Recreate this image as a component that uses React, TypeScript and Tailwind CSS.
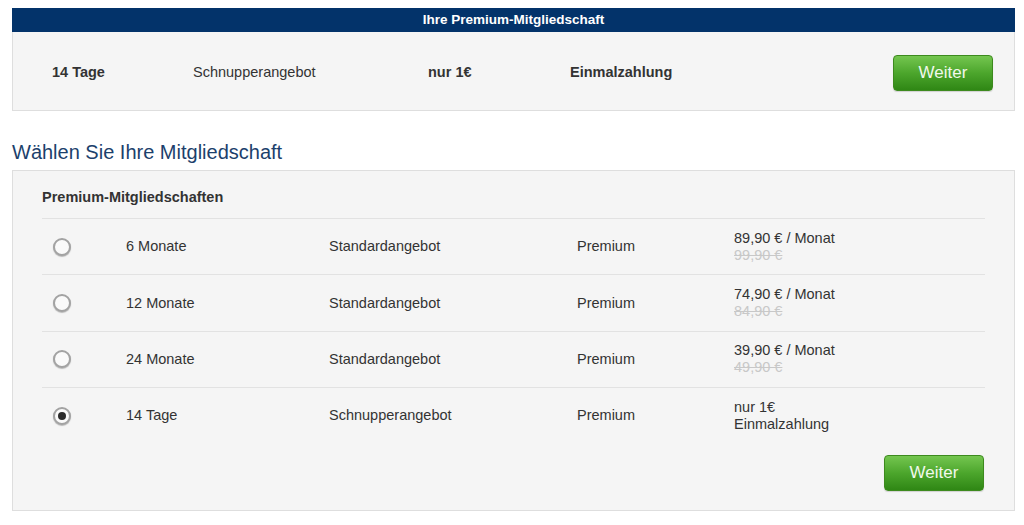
import React, { useState } from 'react';

type Plan = {
  id: string;
  duration: string;
  offer: string;
  level: string;
  price: string;
  sub: string;
  strike: boolean;
};

const PLANS: Plan[] = [
  { id: '6m', duration: '6 Monate', offer: 'Standardangebot', level: 'Premium', price: '89,90 € / Monat', sub: '99,90 €', strike: true },
  { id: '12m', duration: '12 Monate', offer: 'Standardangebot', level: 'Premium', price: '74,90 € / Monat', sub: '84,90 €', strike: true },
  { id: '24m', duration: '24 Monate', offer: 'Standardangebot', level: 'Premium', price: '39,90 € / Monat', sub: '49,90 €', strike: true },
  { id: '14d', duration: '14 Tage', offer: 'Schnupperangebot', level: 'Premium', price: 'nur 1€', sub: 'Einmalzahlung', strike: false },
];

function WeiterButton() {
  return (
    <button className="w-[100px] h-[36px] rounded-[4px] border border-[#3d8a1e] bg-gradient-to-b from-[#74c64f] via-[#4ca62c] to-[#2f8714] text-[17px] text-[#f1f8ec] shadow-[0_1px_1px_rgba(0,0,0,0.15)]">
      Weiter
    </button>
  );
}

function Radio({ checked }: { checked: boolean }) {
  return (
    <span className="flex items-center justify-center w-[18px] h-[18px] rounded-full border-2 border-[#a3a3a3] bg-[#fafafa] shadow-[0_1px_1px_rgba(0,0,0,0.25)]">
      {checked && <span className="w-[8px] h-[8px] rounded-full bg-[#2b2b2b]" />}
    </span>
  );
}

export default function App() {
  const [selected, setSelected] = useState('14d');

  return (
    <div className="w-[1024px] h-[525px] bg-white pt-[8px] px-[12px] text-[#333] font-['Liberation_Sans',Arial,sans-serif] overflow-hidden">
      {/* Current membership */}
      <div className="w-[1003px]">
        <div className="h-[24px] bg-[#03336a] flex items-center justify-center text-white font-bold text-[13.5px]">
          Ihre Premium-Mitgliedschaft
        </div>
        <div className="h-[79px] bg-[#f5f5f5] border border-t-0 border-[#dedede] flex items-center pt-[3px] pl-[39px] pr-[21px] text-[14.5px]">
          <span className="w-[141px] font-bold">14 Tage</span>
          <span className="w-[235px]">Schnupperangebot</span>
          <span className="w-[142px] font-bold">nur 1€</span>
          <span className="flex-1 font-bold">Einmalzahlung</span>
          <WeiterButton />
        </div>
      </div>

      <h2 className="mt-[29px] mb-[6px] text-[20px] leading-[24px] text-[#1c3f6c]">Wählen Sie Ihre Mitgliedschaft</h2>

      {/* Plan choice */}
      <div className="w-[1003px] bg-[#f5f5f5] border border-[#dedede] pt-[18px] pb-[19px] px-[29px] text-[14.5px] leading-[17px]">
        <h3 className="font-bold pb-[12px]">Premium-Mitgliedschaften</h3>
        {PLANS.map((p) => (
          <div
            key={p.id}
            onClick={() => setSelected(p.id)}
            className="grid grid-cols-[84px_203px_248px_157px_1fr] items-center border-t border-[#e2e2e2] py-[10.7px] cursor-pointer"
          >
            <div className="pl-[11px]">
              <Radio checked={selected === p.id} />
            </div>
            <div>{p.duration}</div>
            <div>{p.offer}</div>
            <div>{p.level}</div>
            <div>
              <div>{p.price}</div>
              <div className={p.strike ? 'text-[#c8c8c8] line-through' : ''}>{p.sub}</div>
            </div>
          </div>
        ))}
        <div className="flex justify-end mt-[11px] pr-[1px]">
          <WeiterButton />
        </div>
      </div>
    </div>
  );
}
